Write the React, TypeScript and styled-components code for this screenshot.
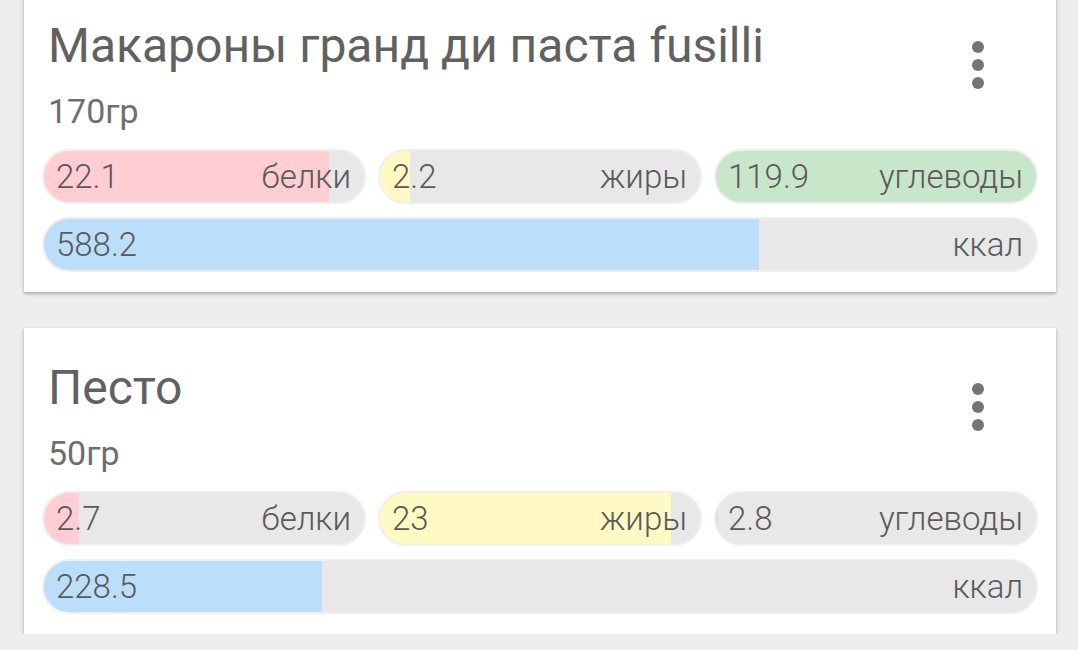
import React from 'react';
import styled, { createGlobalStyle } from 'styled-components';

interface Macro {
  label: string;
  value: number;
  max: number;
  color: string;
}

interface Food {
  name: string;
  weight: string;
  macros: Macro[];
  kcal: number;
}

const KCAL_MAX = 816;

const foods: Food[] = [
  {
    name: 'Макароны гранд ди паста fusilli',
    weight: '170гр',
    macros: [
      { label: 'белки', value: 22.1, max: 24.8, color: '#ffcdd2' },
      { label: 'жиры', value: 2.2, max: 23.4, color: '#fff9c4' },
      { label: 'углеводы', value: 119.9, max: 119.9, color: '#c8e6c9' },
    ],
    kcal: 588.2,
  },
  {
    name: 'Песто',
    weight: '50гр',
    macros: [
      { label: 'белки', value: 2.7, max: 24.8, color: '#ffcdd2' },
      { label: 'жиры', value: 23, max: 25.3, color: '#fff9c4' },
      { label: 'углеводы', value: 2.8, max: 400, color: '#c8e6c9' },
    ],
    kcal: 228.5,
  },
];

const GlobalStyle = createGlobalStyle`
  html, body {
    margin: 0;
    padding: 0;
    background: #eeeeee;
    font-family: Roboto, "Noto Sans", sans-serif;
    overflow: hidden;
  }
`;

const List = styled.div`
  display: flex;
  flex-direction: column;
  gap: 36px;
  padding: 0 22px 0 24px;
  margin-top: -14px;
`;

const Card = styled.div`
  background: #ffffff;
  box-shadow: 0 2px 4px rgba(0, 0, 0, 0.22), 0 1px 2px rgba(0, 0, 0, 0.12);
  padding: 32px 18px 20px;
  display: flex;
  flex-direction: column;
`;

const Header = styled.div`
  display: flex;
  align-items: flex-start;
  padding-left: 6px;
  height: 131px;
`;

const TitleBlock = styled.div`
  flex: 1;
  display: flex;
  flex-direction: column;
`;

const Title = styled.div`
  font-size: 48px;
  line-height: 56px;
  color: #616161;
`;

const Weight = styled.div`
  margin-top: 17px;
  font-size: 34px;
  line-height: 40px;
  color: #6e6e6e;
`;

const MenuButton = styled.div`
  width: 48px;
  margin: 22px 36px 0 0;
  display: flex;
  justify-content: center;
`;

const Rows = styled.div`
  display: flex;
  flex-direction: column;
  gap: 13px;
`;

const MacroRow = styled.div`
  display: grid;
  grid-template-columns: repeat(3, 1fr);
  gap: 12px;
`;

const Pill = styled.div`
  position: relative;
  height: 55px;
  box-sizing: border-box;
  border-radius: 28px;
  border: 2px solid #efefef;
  background: #e8e8e8;
  overflow: hidden;
`;

const Fill = styled.div<{ $color: string }>`
  position: absolute;
  left: 0;
  top: 0;
  bottom: 0;
  background: ${(p) => p.$color};
`;

const PillText = styled.div`
  position: relative;
  height: 100%;
  display: flex;
  align-items: center;
  justify-content: space-between;
  padding: 0 13px 0 12px;
  font-size: 33px;
  font-weight: 300;
  color: #5a5a5a;
`;

const MoreIcon = () => (
  <svg width="14" height="50" viewBox="0 0 14 50">
    <circle cx="7" cy="7" r="6" fill="#757575" />
    <circle cx="7" cy="25" r="6" fill="#757575" />
    <circle cx="7" cy="43" r="6" fill="#757575" />
  </svg>
);

const Bar: React.FC<{ value: number; max: number; label: string; color: string }> = ({
  value,
  max,
  label,
  color,
}) => (
  <Pill>
    <Fill $color={color} style={{ width: `${Math.min(100, (value / max) * 100)}%` }} />
    <PillText>
      <span>{value}</span>
      <span>{label}</span>
    </PillText>
  </Pill>
);

const FoodCard: React.FC<{ food: Food }> = ({ food }) => (
  <Card>
    <Header>
      <TitleBlock>
        <Title>{food.name}</Title>
        <Weight>{food.weight}</Weight>
      </TitleBlock>
      <MenuButton>
        <MoreIcon />
      </MenuButton>
    </Header>
    <Rows>
      <MacroRow>
        {food.macros.map((m) => (
          <Bar key={m.label} value={m.value} max={m.max} label={m.label} color={m.color} />
        ))}
      </MacroRow>
      <Bar value={food.kcal} max={KCAL_MAX} label="ккал" color="#bbdefb" />
    </Rows>
  </Card>
);

const App: React.FC = () => (
  <>
    <GlobalStyle />
    <List>
      {foods.map((f) => (
        <FoodCard key={f.name} food={f} />
      ))}
    </List>
  </>
);

export default App;
